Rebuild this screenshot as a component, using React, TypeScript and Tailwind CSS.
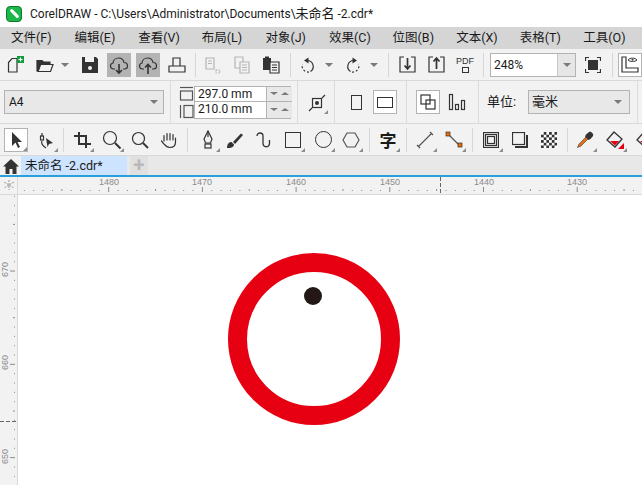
import React from "react";

const uiFont = { fontFamily: 'Roboto, "Noto Sans CJK SC", sans-serif' };

const menus = ["文件(F)", "编辑(E)", "查看(V)", "布局(L)", "对象(J)", "效果(C)", "位图(B)", "文本(X)", "表格(T)", "工具(O)"];

const Sep = ({ className = "" }: { className?: string }) => <div className={`w-px h-[24px] shrink-0 bg-[#d6d6d6] ${className}`} />;

const Caret = ({ className = "" }: { className?: string }) => (
  <div className={`w-0 h-0 shrink-0 border-x-[4px] border-x-transparent border-t-[4px] border-t-[#7a7a7a] ${className}`} />
);

// 24x24 slot that every toolbar icon sits in
const Tool = ({ className = "", flyout, children }: { className?: string; flyout?: boolean; children: React.ReactNode }) => (
  <div className={`relative w-[24px] h-[24px] shrink-0 flex items-center justify-center ${className}`}>
    {children}
    {flyout && (
      <div className="absolute right-0 bottom-0 w-0 h-0 border-l-[4px] border-l-transparent border-b-[4px] border-b-[#8c8c8c]" />
    )}
  </div>
);

const Ico = ({ children, w = 20, h = 20 }: { children: React.ReactNode; w?: number; h?: number }) => (
  <svg width={w} height={h} viewBox={`0 0 ${w} ${h}`} fill="none" stroke="#333" strokeWidth="1.2">
    {children}
  </svg>
);

const Cloud = ({ up }: { up?: boolean }) => (
  <Ico>
    <path d="M6 14H4.500C2.500 14 1.500 12.500 1.500 11C1.500 9.500 2.500 8.300 4 8C4.300 5 6.800 3 9.500 3C12.500 3 14.500 5 15 7.500C17 7.500 18.500 9 18.500 11C18.500 12.800 17 14 15.500 14H14" />
    {up ? <path d="M10 19V10M7 12.500L10 9.500L13 12.500" strokeWidth="1.600" /> : <path d="M10 9V18M7 15L10 18L13 15" strokeWidth="1.600" />}
  </Ico>
);

function Ruler() {
  const ticks = Array.from({ length: 70 }, (_, i) => i);
  return (
    <svg width="625" height="17" className="block" stroke="#8a8a8a">
      {ticks.map((i) => {
        const x = 109 - 18 - 94 + i * 9.37;
        if (x < 0) return null;
        const major = i % 10 === 0;
        const mid = i % 5 === 0;
        return <line key={i} x1={x} x2={x} y1={major ? 10 : mid ? 12 : 13} y2={major ? 15 : 14} strokeWidth="1" />;
      })}
      <line x1="422.500" x2="422.500" y1="0" y2="17" strokeDasharray="4 2" stroke="#666" />
    </svg>
  );
}

export default function App() {
  return (
    <div className="w-[642px] h-[485px] overflow-hidden flex flex-col bg-white text-[#1a1a1a]" style={uiFont}>
      {/* Title bar */}
      <div className="h-[27px] flex items-center bg-white shrink-0">
        <div className="ml-[6px] w-[16px] h-[16px] rounded-[4px] bg-[#1cb64a] border border-[#0b7a26] flex items-center justify-center">
          <div className="w-[11px] h-[3px] bg-white rotate-45 rounded-sm" />
        </div>
        <div className="ml-[8px] text-[12px] whitespace-nowrap">
          CorelDRAW - C:\Users\Administrator\Documents\<span className="text-[13px]">未命名</span> -2.cdr*
        </div>
      </div>

      {/* Menu bar */}
      <div className="h-[22px] flex items-center pl-[11px] bg-[#d5d5d5] shrink-0">
        {menus.map((m) => (
          <div key={m} className="w-[63.600px] shrink-0 text-[12.500px] whitespace-nowrap">{m}</div>
        ))}
      </div>

      {/* Standard toolbar */}
      <div className="h-[32px] flex items-center pl-[4px] bg-[#f2f2f2] border-b border-[#d9d9d9] shrink-0 overflow-hidden">
        <Tool>
          <Ico>
            <path d="M2.500 7.500L6 3.500H11V17H2.500Z" />
            <rect x="11" y="1" width="7" height="7" fill="#0f9d3a" stroke="none" />
            <path d="M14.500 2.500V6.500M12.500 4.500H16.500" stroke="#fff" />
          </Ico>
        </Tool>
        <Tool className="ml-[5px]">
          <Ico>
            <path d="M2 5.500H7L8.500 7H15V9H5.500L3 16H2Z" fill="#333" />
            <path d="M5.500 9.500H18L15.500 16.500H3Z" />
          </Ico>
        </Tool>
        <Caret className="ml-[4px]" />
        <Tool className="ml-[9px]">
          <Ico>
            <path d="M2 2H16L18 4V18H2Z" fill="#333" stroke="none" />
            <rect x="5" y="2" width="9" height="5" fill="#f2f2f2" stroke="none" />
            <circle cx="10" cy="13" r="2" fill="#f2f2f2" stroke="none" />
          </Ico>
        </Tool>
        <Tool className="ml-[5px] bg-[#b3b3b3]"><Cloud /></Tool>
        <Tool className="ml-[5px] bg-[#b3b3b3]"><Cloud up /></Tool>
        <Tool className="ml-[5px]">
          <Ico>
            <path d="M6 11V3H13V11" />
            <path d="M2 17V11H18V17Z" />
          </Ico>
        </Tool>
        <Sep className="ml-[6px]" />
        <Tool className="ml-[5px]">
          <Ico>
            <g stroke="#b5b5b5">
              <path d="M3 3H11V14H3ZM5 6H9M5 8.500H9" />
              <path d="M13 15H17V18H13Z" strokeDasharray="1.500 1" />
            </g>
          </Ico>
        </Tool>
        <Tool className="ml-[5px]">
          <Ico>
            <g stroke="#b5b5b5">
              <path d="M3 2H11V13H3Z" />
              <path d="M8 7H17V18H8ZM10 10H15M10 12.500H15M10 15H15" fill="#f2f2f2" />
            </g>
          </Ico>
        </Tool>
        <Tool className="ml-[5px]">
          <Ico>
            <path d="M2 3H10V15H2Z" fill="#333" stroke="none" />
            <path d="M4 1.500H8V4H4Z" fill="#333" stroke="none" />
            <path d="M9 7H18V18H9ZM11 10H16M11 12.500H16M11 15H16" fill="#f2f2f2" />
          </Ico>
        </Tool>
        <Sep className="ml-[7px]" />
        <Tool className="ml-[5px]">
          <Ico w={18} h={18}>
            <path d="M8 4.500A6 6 0 0 1 11.500 15.500" />
            <path d="M10 16A6 6 0 0 1 3.500 8" strokeDasharray="2 2" />
            <path d="M9.500 1.500V7.500L5 4.500Z" fill="#333" stroke="none" />
          </Ico>
        </Tool>
        <Caret className="ml-[5px]" />
        <Tool className="ml-[8px]">
          <Ico w={18} h={18}>
            <path d="M10 4.500A6 6 0 0 0 6.500 15.500" />
            <path d="M8 16A6 6 0 0 0 14.500 8" strokeDasharray="2 2" />
            <path d="M8.500 1.500V7.500L13 4.500Z" fill="#333" stroke="none" />
          </Ico>
        </Tool>
        <Caret className="ml-[5px]" />
        <Sep className="ml-[10px]" />
        <Tool className="ml-[6px]">
          <Ico w={17} h={17}>
            <path d="M5 1H1V16H16V1H12" />
            <path d="M8.500 2V12M5.500 9.500L8.500 13L11.500 9.500" strokeWidth="1.700" />
          </Ico>
        </Tool>
        <Tool className="ml-[5px]">
          <Ico w={17} h={17}>
            <path d="M5 1H1V16H16V1H12" />
            <path d="M8.500 13V3M5.500 5.500L8.500 2L11.500 5.500" strokeWidth="1.700" />
          </Ico>
        </Tool>
        <Tool className="ml-[5px]">
          <div className="flex flex-col items-center">
            <span className="text-[9px] leading-[9px] text-[#333]" style={{ fontFamily: '"Liberation Sans", sans-serif' }}>PDF</span>
            <div className="w-[7px] h-[6px] mt-[1px] border border-[#333]" />
          </div>
        </Tool>
        <Sep className="ml-[6px]" />
        <div className="ml-[6px] w-[86px] h-[24px] shrink-0 flex border border-[#b3b3b3] bg-white">
          <div className="flex-1 pl-[3px] text-[12px] leading-[22px]">248%</div>
          <div className="w-[18px] flex items-center justify-center bg-[#e6e6e6] border-l border-[#c8c8c8]"><Caret /></div>
        </div>
        <Tool className="ml-[5px]">
          <Ico w={16} h={16}>
            <path d="M0.500 4V0.500H4M12 0.500H15.500V4M15.500 12V15.500H12M4 15.500H0.500V12" />
            <rect x="3" y="3" width="10" height="10" fill="#333" stroke="none" />
          </Ico>
        </Tool>
        <Sep className="ml-[7px]" />
        <Tool className="ml-[5px] bg-white border border-[#b3b3b3]">
          <Ico w={20} h={20}>
            <path d="M2 2V17H18V13H6V2Z" />
            <path d="M8 5C10 2.500 15 2.500 17 5C15 7 10 7 8 5Z" strokeWidth="1" />
            <circle cx="12.500" cy="4.800" r="1" fill="#333" stroke="none" />
          </Ico>
        </Tool>
      </div>

      {/* Property bar */}
      <div className="h-[43px] flex items-center pl-[4px] bg-[#f2f2f2] border-b border-[#d9d9d9] shrink-0 overflow-hidden">
        <div className="w-[160px] h-[24px] shrink-0 flex items-center justify-between px-[4px] bg-[#e8e8e8] border border-[#b3b3b3]">
          <span className="text-[12px]">A4</span>
          <Caret className="mr-[1px]" />
        </div>
        <div className="ml-[6px] w-px h-[42px] shrink-0 bg-[#dcdcdc]" />
        <div className="ml-[8px] w-[15px] h-[33px] shrink-0 flex flex-col justify-between">
          <Ico w={15} h={15}>
            <path d="M1 1.500H14" stroke="#555" />
            <rect x="1.500" y="5" width="12" height="9" stroke="#555" />
          </Ico>
          <Ico w={15} h={15}>
            <path d="M1.500 1V14" stroke="#555" />
            <rect x="5" y="1.500" width="9" height="12" stroke="#555" />
          </Ico>
        </div>
        <div className="w-[97px] h-[33px] shrink-0 grid grid-cols-[72px_25px] grid-rows-2 border border-[#b3b3b3] text-[12px] leading-[15px]">
          <div className="bg-white pl-[3px] border-b border-r border-[#b3b3b3]">297.0 mm</div>
          <div className="bg-[#e8e8e8] border-b border-[#b3b3b3] flex items-center justify-around px-[2px]">
            <Caret className="!border-t-[3px]" />
            <div className="w-0 h-0 border-x-[4px] border-x-transparent border-b-[3px] border-b-[#7a7a7a]" />
          </div>
          <div className="bg-white pl-[3px] border-r border-[#b3b3b3]">210.0 mm</div>
          <div className="bg-[#e8e8e8] flex items-center justify-around px-[2px]">
            <Caret className="!border-t-[3px]" />
            <div className="w-0 h-0 border-x-[4px] border-x-transparent border-b-[3px] border-b-[#7a7a7a]" />
          </div>
        </div>
        <div className="ml-[6px] w-px h-[42px] shrink-0 bg-[#dcdcdc]" />
        <Tool className="ml-[6px]" flyout>
          <Ico>
            <rect x="6.500" y="6.500" width="9" height="9" />
            <circle cx="11" cy="11" r="2" fill="#333" stroke="none" />
            <path d="M3 19L6 16M16 6L19 3" />
          </Ico>
        </Tool>
        <div className="ml-[6px] w-px h-[42px] shrink-0 bg-[#dcdcdc]" />
        <Tool className="ml-[9px]">
          <div className="w-[11px] h-[15px] border border-[#333]" />
        </Tool>
        <Tool className="ml-[5px] bg-white border border-[#b3b3b3]">
          <div className="w-[16px] h-[11px] border border-[#333]" />
        </Tool>
        <div className="ml-[9px] w-px h-[42px] shrink-0 bg-[#dcdcdc]" />
        <Tool className="ml-[9px] bg-white border border-[#b3b3b3]">
          <Ico w={16} h={16}>
            <rect x="1" y="1" width="9" height="9" />
            <rect x="6" y="6" width="9" height="9" />
          </Ico>
        </Tool>
        <Tool className="ml-[5px]">
          <Ico w={18} h={18}>
            <rect x="1.500" y="1.500" width="3" height="15" />
            <rect x="7.500" y="11.500" width="3" height="5" />
            <rect x="13.500" y="7.500" width="3" height="9" />
          </Ico>
        </Tool>
        <div className="ml-[9px] w-px h-[42px] shrink-0 bg-[#dcdcdc]" />
        <div className="ml-[8px] w-[33px] shrink-0 text-[13px] whitespace-nowrap">单位:</div>
        <div className="ml-[8px] w-[102px] h-[24px] shrink-0 flex items-center justify-between pl-[3px] pr-[7px] bg-[#e8e8e8] border border-[#b3b3b3]">
          <span className="text-[13px]">毫米</span>
          <Caret />
        </div>
        <div className="ml-[7px] w-px h-[42px] shrink-0 bg-[#dcdcdc]" />
      </div>

      {/* Toolbox row */}
      <div className="h-[32px] flex items-center pl-[4px] bg-[#f2f2f2] border-b border-[#d9d9d9] shrink-0 overflow-hidden">
        <Tool className="bg-white border border-[#b3b3b3]" flyout>
          <Ico w={14} h={18}>
            <path d="M3 1V15L6.500 11.500L9 17L11 16L8.500 11H13Z" fill="#333" stroke="none" />
          </Ico>
        </Tool>
        <Tool className="ml-[6px]" flyout>
          <Ico w={18} h={20}>
            <path d="M5 3V6M5 11C4 13 6 16 9 18" />
            <rect x="3.500" y="6" width="3" height="4" />
            <path d="M9 8L16 13L12 14L10.500 17Z" fill="#333" stroke="none" />
          </Ico>
        </Tool>
        <Sep className="ml-[5px]" />
        <Tool className="ml-[6px]" flyout>
          <Ico w={18} h={18}>
            <path d="M6 1V13H18M1 5H13V17" strokeWidth="2" />
          </Ico>
        </Tool>
        <Tool className="ml-[6px]" flyout>
          <Ico>
            <circle cx="8" cy="8" r="6.500" />
            <path d="M13 13L18.500 18.500" strokeWidth="2" />
          </Ico>
        </Tool>
        <Tool className="ml-[4px]">
          <Ico w={18} h={18}>
            <circle cx="7.500" cy="7.500" r="6" />
            <path d="M12 12L17 17" strokeWidth="1.800" />
          </Ico>
        </Tool>
        <Tool className="ml-[5px]">
          <Ico w={18} h={18}>
            <path d="M4 10V4.500M7 9V2.500M10 9V2.500M13 9V3.500M15.500 7V11C15.500 14.500 13.500 16.500 10 16.500C6.500 16.500 5.500 15 4 13L1.500 10" strokeLinecap="round" />
          </Ico>
        </Tool>
        <Sep className="ml-[6px]" />
        <Tool className="ml-[8px]" flyout>
          <Ico w={16} h={20}>
            <path d="M8 1L12 9L10.500 13H5.500L4 9Z" />
            <path d="M8 1V7" />
            <rect x="5" y="14" width="6" height="4" />
          </Ico>
        </Tool>
        <Tool className="ml-[3px]">
          <Ico w={18} h={18}>
            <path d="M1 17C1 13 3 11 5.500 11L8 13.500C8 16 5 17.500 1 17Z" fill="#333" stroke="none" />
            <path d="M7 11L15 2.500L17 4L9 13Z" fill="#333" stroke="none" />
          </Ico>
        </Tool>
        <Tool className="ml-[5px]">
          <Ico w={18} h={18}>
            <path d="M2 5C2 1 8 1 8 5V12C8 17 14.500 17 14.500 12V9" strokeWidth="1.300" />
          </Ico>
        </Tool>
        <Tool className="ml-[5px]" flyout>
          <div className="w-[16px] h-[16px] border border-[#333]" />
        </Tool>
        <Tool className="ml-[6px]" flyout>
          <div className="w-[17px] h-[17px] rounded-full border border-[#333]" />
        </Tool>
        <Tool className="ml-[4px]" flyout>
          <Ico w={18} h={16}>
            <path d="M5 1H13L17 8L13 15H5L1 8Z" stroke="#555" />
          </Ico>
        </Tool>
        <Sep className="ml-[6px]" />
        <Tool className="ml-[6px]" flyout>
          <span className="text-[17px] font-bold leading-none" style={{ fontFamily: '"Noto Sans CJK SC", sans-serif' }}>字</span>
        </Tool>
        <Sep className="ml-[6px]" />
        <Tool className="ml-[6px]" flyout>
          <Ico w={18} h={18}>
            <path d="M2.500 15.500L15.500 2.500M1 14L4 17M14 1L17 4" stroke="#555" />
          </Ico>
        </Tool>
        <Tool className="ml-[5px]" flyout>
          <Ico w={18} h={18}>
            <path d="M4 4L14 14" stroke="#555" />
            <rect x="1" y="1" width="4" height="4" fill="#ef6c00" stroke="#333" strokeWidth="0.700" />
            <rect x="13" y="12" width="4" height="4" fill="#ef6c00" stroke="#333" strokeWidth="0.700" />
          </Ico>
        </Tool>
        <Sep className="ml-[6px]" />
        <Tool className="ml-[6px]" flyout>
          <Ico w={16} h={16}>
            <rect x="0.500" y="0.500" width="15" height="15" />
            <rect x="2.500" y="2.500" width="11" height="11" />
            <rect x="4.500" y="4.500" width="7" height="7" />
          </Ico>
        </Tool>
        <Tool className="ml-[5px]">
          <Ico w={16} h={16}>
            <rect x="0.500" y="0.500" width="12" height="12" />
            <path d="M15 3V15H3" strokeWidth="2" />
          </Ico>
        </Tool>
        <Tool className="ml-[5px]">
          <div className="w-[16px] h-[16px] bg-[conic-gradient(#333_25%,#fff_0_50%,#333_0_75%,#fff_0)] bg-[length:5.400px_5.400px]" />
        </Tool>
        <Sep className="ml-[6px]" />
        <Tool className="ml-[5px]" flyout>
          <Ico w={18} h={18}>
            <path d="M1.500 16.500L3 13L10 6L12 8L5 15Z" fill="#e8701a" stroke="#333" strokeWidth="0.600" />
            <path d="M10 3.500L13 1C15 0 18 3 17 5L14.500 8L12.500 9L9 5.500Z" fill="#333" stroke="none" />
          </Ico>
        </Tool>
        <Tool className="ml-[6px]" flyout>
          <Ico w={18} h={18}>
            <path d="M8 1L16 8L9 16L1 9Z" strokeWidth="1.300" />
            <path d="M4 10L13 10L9 14.500Z" fill="#e60012" stroke="none" />
            <path d="M18 12V18H12Z" fill="#e60012" stroke="none" />
          </Ico>
        </Tool>
        <Tool className="ml-[6px]">
          <Ico w={18} h={18}>
            <path d="M8 1L16 8L9 16L1 9Z" strokeWidth="1.300" />
            <path d="M4 10L13 10L9 14.500Z" fill="#e60012" stroke="none" />
          </Ico>
        </Tool>
      </div>

      {/* Document tabs */}
      <div className="h-[21px] flex bg-[#e8e8e8] shrink-0 border-b-2 border-[#29a0dc]">
        <div className="w-[21px] shrink-0 flex items-center justify-center bg-[#f2f2f2]">
          <svg width="16" height="16" viewBox="0 0 16 16" fill="#333">
            <path d="M8 1L0 8.500H2.500V16H6.500V11H9.500V16H13.500V8.500H16Z" />
          </svg>
        </div>
        <div className="w-[106px] shrink-0 bg-[#cce4ff] pl-[4px] text-[12.500px] leading-[19px] whitespace-nowrap">未命名 -2.cdr*</div>
        <div className="ml-[3px] w-[18px] shrink-0 flex items-center justify-center bg-[#e0e0e0]">
          <span className="text-[20px] leading-[17px] text-[#b8b8b8] font-bold">+</span>
        </div>
      </div>

      {/* Rulers and page */}
      <div className="flex-1 grid grid-cols-[18px_1fr] grid-rows-[18px_1fr] min-h-0">
        <div className="bg-[#f2f2f2] border-r border-b border-[#d9d9d9] flex items-start justify-center pt-[2px]">
          <svg width="12" height="12" viewBox="0 0 12 12" fill="none" stroke="#999">
            <path d="M6 1V11M1 3L11 9M11 3L1 9" strokeDasharray="2 1" />
          </svg>
        </div>
        <div className="relative bg-[#f2f2f2] border-b border-[#d9d9d9] overflow-hidden">
          <Ruler />
          {[
            ["1480", "left-[81px]"],
            ["1470", "left-[174px]"],
            ["1460", "left-[268px]"],
            ["1450", "left-[362px]"],
            ["1440", "left-[456px]"],
            ["1430", "left-[549px]"],
          ].map(([t, pos]) => (
            <span key={t} className={`absolute top-[-1px] text-[9px] leading-[12px] text-[#8a8a8a] ${pos}`} style={{ fontFamily: '"Liberation Sans", sans-serif' }}>{t}</span>
          ))}
        </div>
        <div className="relative bg-[#f2f2f2] border-r border-[#d9d9d9] overflow-hidden">
          <svg width="17" height="290" className="block" stroke="#8a8a8a">
            {Array.from({ length: 34 }, (_, i) => {
              const y = 1.400 + i * 9.33;
              const major = (i - 8) % 10 === 0;
              const mid = (i - 3) % 5 === 0;
              return <line key={i} y1={y} y2={y} x1={major ? 10 : mid ? 13 : 14} x2="15" />;
            })}
            <line x1="0" x2="17" y1="226.500" y2="226.500" strokeDasharray="4 2" stroke="#666" />
          </svg>
          {[
            ["670", "top-[70px]"],
            ["660", "top-[163px]"],
            ["650", "top-[257px]"],
          ].map(([t, pos]) => (
            <span key={t} className={`absolute left-[-1px] w-[12px] text-center text-[9px] leading-[12px] text-[#8a8a8a] -rotate-90 ${pos}`} style={{ fontFamily: '"Liberation Sans", sans-serif' }}>{t}</span>
          ))}
        </div>
        <div className="relative bg-white overflow-hidden">
          <div className="absolute left-[210px] top-[58px] w-[172px] h-[172px] rounded-full border-[19px] border-[#e60012]" />
          <div className="absolute left-[286px] top-[92px] w-[18px] h-[18px] rounded-full bg-[#231815]" />
        </div>
      </div>
    </div>
  );
}
